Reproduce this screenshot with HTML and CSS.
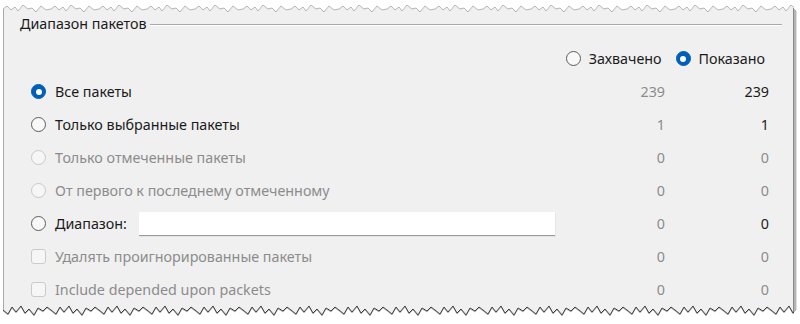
FILE: index.html
```html
<!DOCTYPE html>
<html lang="ru">
<head>
<meta charset="utf-8">
<title>Диапазон пакетов</title>
<link rel="stylesheet" href="styles.css">
</head>
<body>
<div class="sheet">
  <svg class="edge edge-top" width="800" height="15" viewBox="0 0 800 15">
    <defs>
      <pattern id="jagTop" x="3" y="0" width="48" height="15" patternUnits="userSpaceOnUse">
        <polygon points="0,9 4,6 8,10 12,7 15,11 20,5 25,9 29,8 33,12 38,6 43,10 48,9 48,15 0,15" fill="#f0f0f0"/>
        <polyline points="0,9 4,6 8,10 12,7 15,11 20,5 25,9 29,8 33,12 38,6 43,10 48,9" fill="none" stroke="#b4b4b4" stroke-width="1"/>
      </pattern>
    </defs>
    <rect x="3" y="0" width="791" height="15" fill="url(#jagTop)"/>
    <line x1="3.5" y1="9" x2="3.5" y2="15" stroke="#a8a8a8"/>
    <line x1="793.5" y1="8" x2="793.5" y2="15" stroke="#8a8a8a"/>
    <line x1="794.5" y1="9" x2="794.5" y2="15" stroke="#b5b5b5"/>
    <line x1="795.5" y1="10" x2="795.5" y2="15" stroke="#b5b5b5"/>
    <line x1="796.5" y1="11" x2="796.5" y2="15" stroke="#dcdcdc"/>
  </svg>

  <div class="body">
    <div class="group-title"><span>Диапазон пакетов</span><i class="rule"></i></div>

    <div class="row head">
      <span class="opt"><span class="radio"></span>Захвачено</span>
      <span class="opt"><span class="radio on"></span>Показано</span>
    </div>

    <div class="row">
      <span class="label"><span class="radio on"></span>Все пакеты</span>
      <span class="num dim">239</span>
      <span class="num">239</span>
    </div>
    <div class="row">
      <span class="label"><span class="radio"></span>Только выбранные пакеты</span>
      <span class="num dim">1</span>
      <span class="num">1</span>
    </div>
    <div class="row off">
      <span class="label"><span class="radio"></span>Только отмеченные пакеты</span>
      <span class="num">0</span>
      <span class="num">0</span>
    </div>
    <div class="row off">
      <span class="label"><span class="radio"></span>От первого к последнему отмеченному</span>
      <span class="num">0</span>
      <span class="num">0</span>
    </div>
    <div class="row">
      <span class="label"><span class="radio"></span><span class="range-text">Диапазон:</span><span class="field"></span></span>
      <span class="num dim">0</span>
      <span class="num">0</span>
    </div>
    <div class="row off">
      <span class="label"><span class="check"></span>Удалять проигнорированные пакеты</span>
      <span class="num">0</span>
      <span class="num">0</span>
    </div>
    <div class="row off">
      <span class="label"><span class="check"></span>Include depended upon packets</span>
      <span class="num">0</span>
      <span class="num">0</span>
    </div>
  </div>

  <svg class="edge edge-bottom" width="800" height="26" viewBox="0 0 800 26">
    <defs>
      <pattern id="jagBot" x="3" y="0" width="48" height="26" patternUnits="userSpaceOnUse">
        <polygon points="0,0 0,12 5,16 9,9 13,14 18,8 22,15 26,11 31,17 35,10 40,13 44,9 48,12 48,0" fill="#f0f0f0"/>
        <polyline points="0,13 5,17 9,10 13,15 18,9 22,16 26,12 31,18 35,11 40,14 44,10 48,13" fill="none" stroke="#b8b8b8" stroke-width="1"/>
        <polyline points="0,12 5,16 9,9 13,14 18,8 22,15 26,11 31,17 35,10 40,13 44,9 48,12" fill="none" stroke="#3a3a3a" stroke-width="1"/>
      </pattern>
    </defs>
    <rect x="3" y="0" width="791" height="26" fill="url(#jagBot)"/>
    <line x1="3.5" y1="0" x2="3.5" y2="12" stroke="#a8a8a8"/>
    <line x1="793.5" y1="0" x2="793.5" y2="14" stroke="#8a8a8a"/>
    <line x1="794.5" y1="0" x2="794.5" y2="14" stroke="#b5b5b5"/>
    <line x1="795.5" y1="0" x2="795.5" y2="13" stroke="#b5b5b5"/>
    <line x1="796.5" y1="0" x2="796.5" y2="12" stroke="#dcdcdc"/>
  </svg>
</div>
</body>
</html>
```

FILE: styles.css
```css
html, body {
  margin: 0;
  padding: 0;
  background: #ffffff;
}

body {
  font-family: "Noto Sans", "Open Sans", sans-serif;
  font-size: 14.3px;
  color: #1b1b1b;
}

.sheet {
  width: 800px;
  height: 324px;
  display: flex;
  flex-direction: column;
  overflow: hidden;
}

.edge {
  display: block;
  flex: none;
  position: relative;
  z-index: 1;
}

.body {
  flex: 1;
  min-height: 0;
  overflow: hidden;
  margin-left: 3px;
  width: 791px;
  box-sizing: border-box;
  background: #f0f0f0;
  border-left: 1px solid #a8a8a8;
  border-right: 1px solid #8a8a8a;
  box-shadow: 2px 0 0 #b5b5b5, 3px 0 0 #dcdcdc;
  display: flex;
  flex-direction: column;
}

.group-title {
  display: flex;
  align-items: center;
  height: 18px;
  line-height: 18px;
  padding: 0 11px 0 16px;
  flex: none;
}

.group-title .rule {
  flex: 1;
  height: 1px;
  margin-left: 3px;
  background: #a9a9a9;
  box-shadow: 0 1px 0 #ffffff;
}

.row {
  display: flex;
  align-items: center;
  height: 33px;
  flex: none;
  padding: 0 24px 0 27px;
}

.row.head {
  margin-top: 9px;
  justify-content: flex-end;
  gap: 14px;
  padding-right: 28px;
}

.opt {
  display: flex;
  align-items: center;
  gap: 8px;
}

.label {
  flex: 1;
  display: flex;
  align-items: center;
  gap: 9px;
}

.num {
  text-align: right;
  width: 104px;
}

.num.dim,
.row.off {
  color: #8c8c8c;
}

.radio {
  width: 15px;
  height: 15px;
  box-sizing: border-box;
  border-radius: 50%;
  border: 1px solid #5c5c5c;
  background: #f8f8f8;
  flex: none;
  position: relative;
}

.radio.on {
  background: #005fb8;
  border-color: #005fb8;
}

.radio.on::after {
  content: "";
  position: absolute;
  left: 3.5px;
  top: 3.5px;
  width: 6px;
  height: 6px;
  border-radius: 50%;
  background: #ffffff;
}

.row.off .radio {
  border-color: #c9c9c9;
  background: #f6f6f6;
}

.check {
  width: 15px;
  height: 15px;
  box-sizing: border-box;
  border-radius: 3px;
  border: 1px solid #cbcbcb;
  background: #f6f6f6;
  flex: none;
}

.range-text {
  width: 75px;
  color: #1b1b1b;
}

.field {
  width: 416px;
  height: 24px;
  box-sizing: border-box;
  background: #ffffff;
  border-bottom: 1px solid #9a9a9a;
  box-shadow: 1px 1px 0 #e4e4e4;
}
```
